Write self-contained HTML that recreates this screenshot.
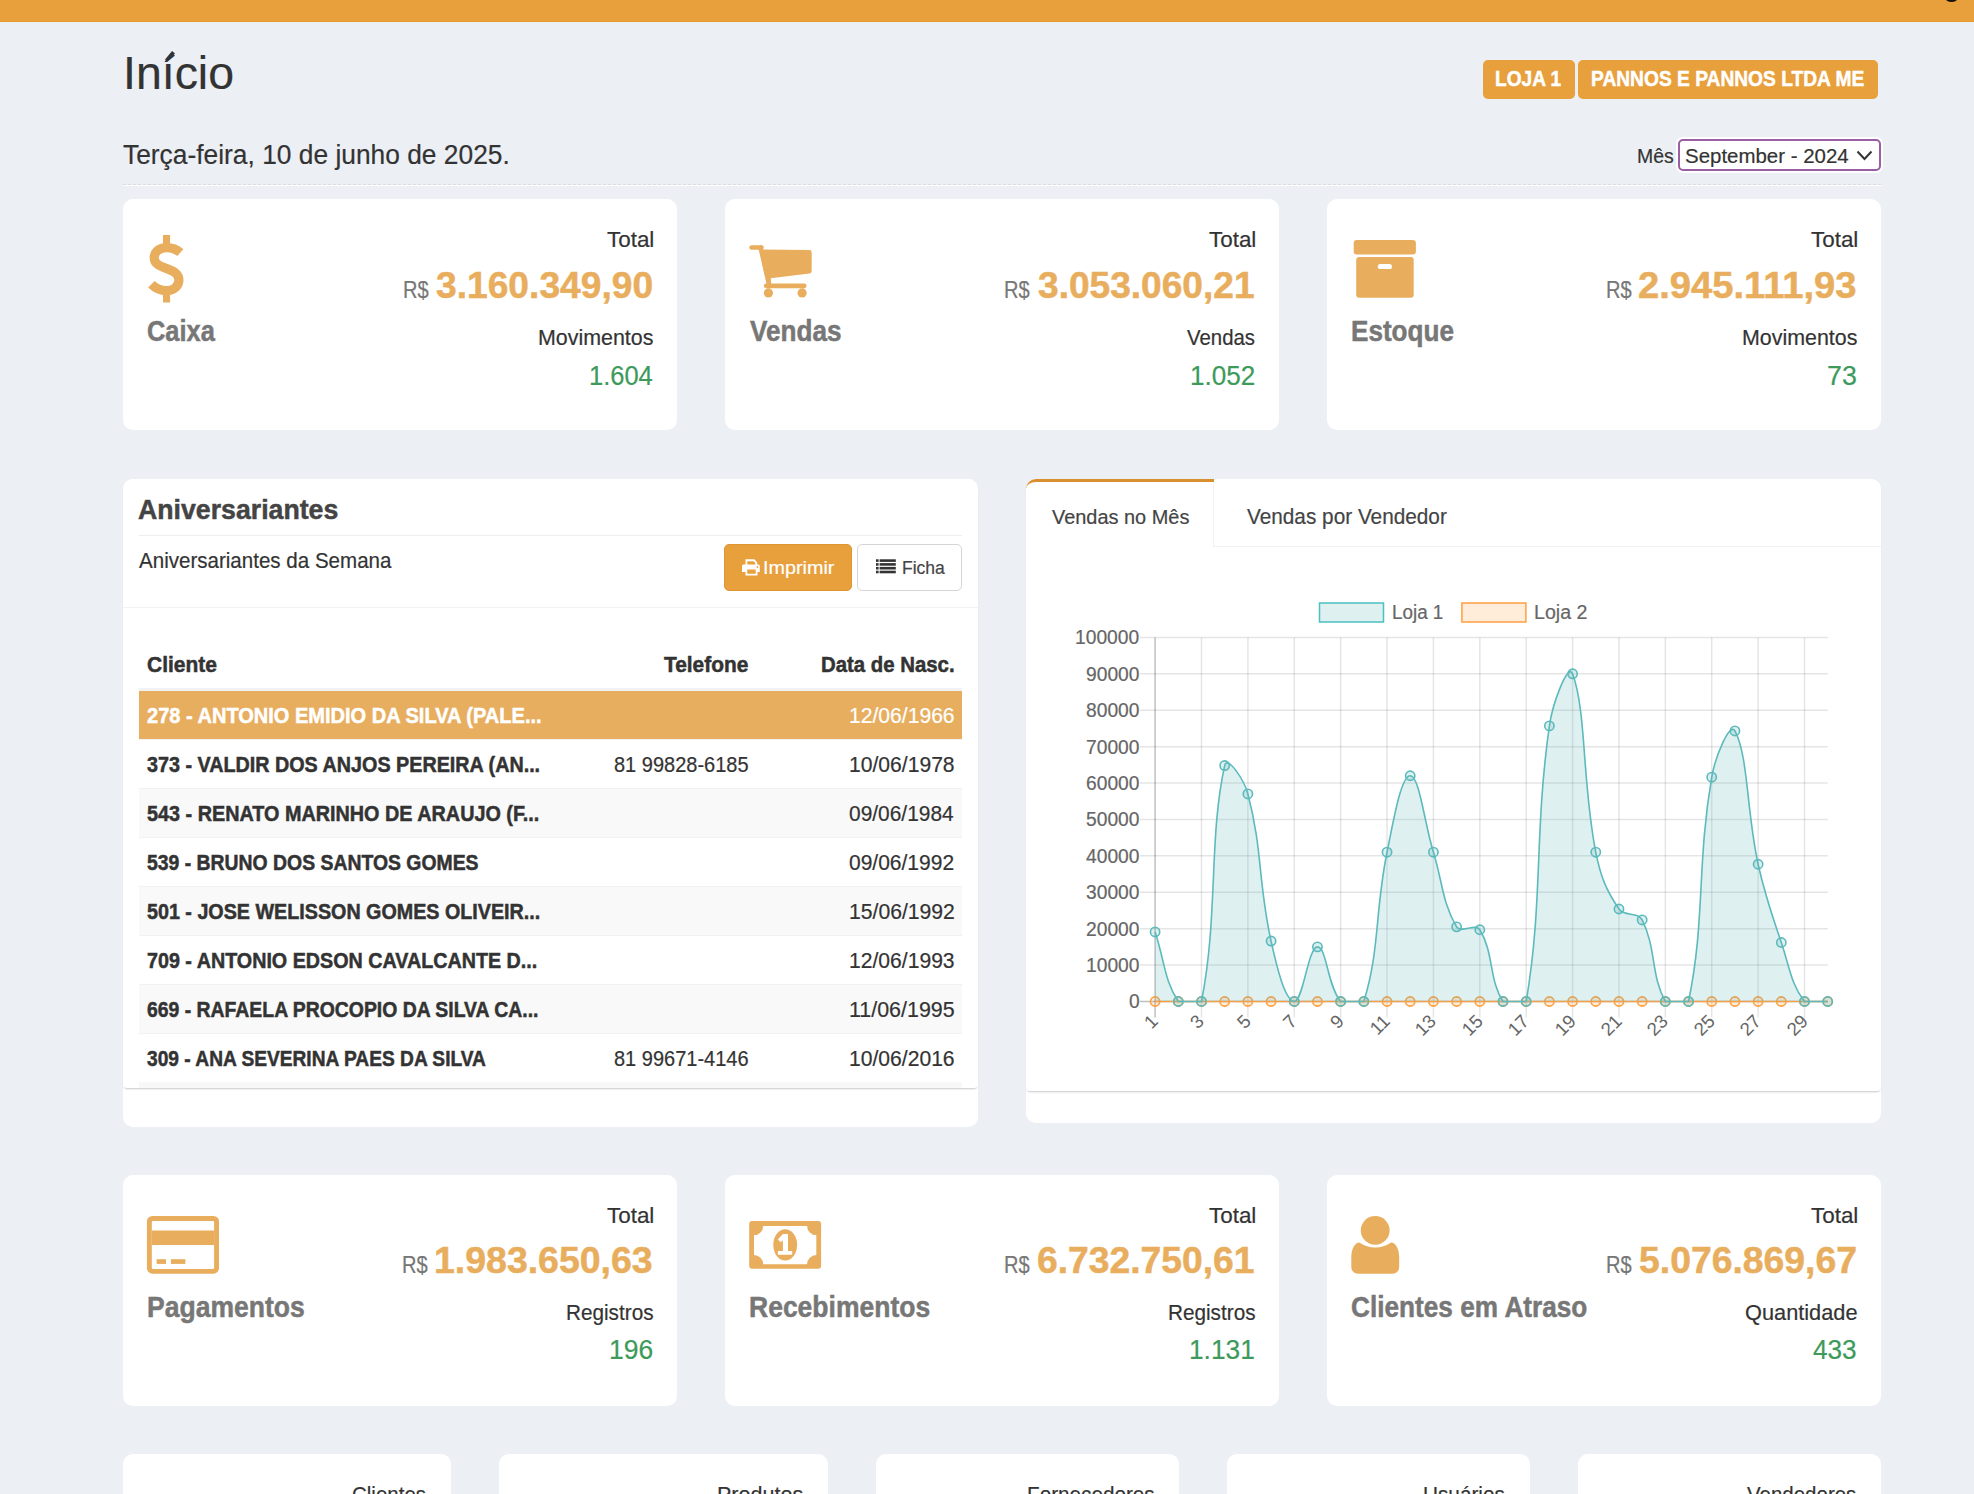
<!DOCTYPE html>
<html><head><meta charset="utf-8"><title>Início</title>
<style>
html,body{margin:0;padding:0}
body{width:1974px;height:1494px;overflow:hidden;background:#ecf0f5;position:relative;font-family:"Liberation Sans",sans-serif}
.a{position:absolute;display:block}
.t{position:absolute;white-space:nowrap;line-height:1;transform-origin:0 0}
svg.a{overflow:visible}
</style></head><body>
<div class="a" style="left:0px;top:0px;width:1974px;height:21px;background:#e8a03c"></div>
<div class="a" style="left:0px;top:21px;width:1974px;height:1px;background:#e69a2e"></div>
<div class="a" style="left:1945px;top:-7px;width:13px;height:9px;border-radius:50%;background:#1a1208"></div>
<span class="t" id="t0" style="left:122.62px;top:50.00px;font-size:46.37px;font-weight:400;color:#333;transform:scaleX(1.0020);-webkit-text-stroke:0.2px #333;">Início</span>
<svg class="a" style="left:160px;top:45px" width="20" height="20" viewBox="160 45 20 20"><polygon points="165,59.4 172.1,51 175,53.4 167.5,61.4" fill="#333"/></svg>
<span class="t" id="t1" style="left:123.47px;top:141.00px;font-size:27.76px;font-weight:400;color:#333;transform:scaleX(0.9497);-webkit-text-stroke:0.2px #333;">Terça-feira, 10 de junho de 2025.</span>
<div class="a" style="left:123px;top:184px;width:1758px;height:0;border-top:1px dashed #d8dbe0"></div>
<div class="a" style="left:123px;top:185px;width:1758px;height:1px;background:#fff"></div>
<div class="a" style="left:1483px;top:60px;width:92px;height:39px;border-radius:5px;background:#e8a03c"></div>
<div class="a" style="left:1578px;top:60px;width:300px;height:39px;border-radius:5px;background:#e8a03c"></div>
<span class="t" id="t2" style="left:1495.26px;top:68.00px;font-size:21.95px;font-weight:700;color:#fff;transform:scaleX(0.8708);-webkit-text-stroke:0.5px #fff;">LOJA 1</span>
<span class="t" id="t3" style="left:1590.75px;top:68.00px;font-size:21.95px;font-weight:700;color:#fff;transform:scaleX(0.8748);-webkit-text-stroke:0.5px #fff;">PANNOS E PANNOS LTDA ME</span>
<span class="t" id="t4" style="left:1637.04px;top:146.00px;font-size:20.78px;font-weight:400;color:#333;transform:scaleX(0.9378);-webkit-text-stroke:0.2px #333;">Mês</span>
<div class="a" style="left:1676px;top:137px;width:207px;height:36px;border-radius:7px;background:#fff"></div>
<div class="a" style="left:1678px;top:139px;width:199px;height:28px;border-radius:5px;border:2px solid #9a5ea3;background:#fff"></div>
<span class="t" id="t5" style="left:1685.48px;top:146.00px;font-size:20.78px;font-weight:400;color:#333;transform:scaleX(0.9847);-webkit-text-stroke:0.2px #333;">September - 2024</span>
<svg class="a" style="left:1855px;top:149px" width="20" height="14"><path d="M2.5 2.5 L9.5 10 L16.5 2.5" fill="none" stroke="#333" stroke-width="2"/></svg>
<div class="a" style="left:123px;top:199px;width:554px;height:231px;background:#fff;border-radius:10px"></div>
<svg class="a" style="left:140px;top:230px" width="50" height="80" viewBox="140 230 50 80"><path d="M180.3,252.6 C176.5,249.2 171.5,247.6 166.6,247.6 C159.2,247.6 154.2,252.2 154.2,257.8 C154.2,270.5 178.9,266.2 178.9,280.2 C178.9,286.3 173.3,290.6 166.6,290.6 C160.6,290.6 155.4,288.2 151.4,284.2" fill="none" stroke="#e8ae5e" stroke-width="9.2"/><rect x="163" y="235" width="7.1" height="10" fill="#e8ae5e"/><rect x="163" y="292.5" width="7.1" height="10" fill="#e8ae5e"/></svg>
<span class="t" id="t6" style="left:147.28px;top:317.00px;font-size:28.63px;font-weight:700;color:#777;transform:scaleX(0.8880);-webkit-text-stroke:0.5px #777;">Caixa</span>
<span class="t" id="t7" style="left:606.55px;top:229.00px;font-size:21.80px;font-weight:400;color:#333;transform:scaleX(1.0283);-webkit-text-stroke:0.2px #333;">Total</span>
<span class="t" id="t8" style="left:402.99px;top:279.00px;font-size:23.40px;font-weight:400;color:#777;transform:scaleX(0.8583);-webkit-text-stroke:0.2px #777;">R$</span>
<span class="t" id="t9" style="left:435.87px;top:268.00px;font-size:36.10px;font-weight:700;color:#e8ae5e;transform:scaleX(1.0307);-webkit-text-stroke:0.5px #e8ae5e;">3.160.349,90</span>
<span class="t" id="t10" style="left:537.69px;top:328.00px;font-size:21.51px;font-weight:400;color:#333;transform:scaleX(0.9958);-webkit-text-stroke:0.2px #333;">Movimentos</span>
<span class="t" id="t11" style="left:588.79px;top:363.00px;font-size:26.79px;font-weight:400;color:#3d9a5b;transform:scaleX(0.9507);-webkit-text-stroke:0.2px #3d9a5b;">1.604</span>
<div class="a" style="left:725px;top:199px;width:554px;height:231px;background:#fff;border-radius:10px"></div>
<svg class="a" style="left:740px;top:235px" width="80" height="70" viewBox="740 235 80 70"><path d="M751.6,247.5 L761.5,247.5" stroke="#e8ae5e" stroke-width="4.6" stroke-linecap="round"/><path d="M759.6,249.6 L809.4,250.1 Q811.7,250.1 811.7,252.5 L811.7,270.9 Q811.7,273.1 809.5,273.4 L770.8,278.3 L771.2,283.8 L766.8,283.8 L763.3,269 Z" fill="#e8ae5e"/><path d="M760.4,247.3 L769.2,285.2" stroke="#e8ae5e" stroke-width="4.4" stroke-linecap="round"/><rect x="763.8" y="283.5" width="42.8" height="4.7" rx="2.35" fill="#e8ae5e"/><circle cx="768.4" cy="292.9" r="4.6" fill="#e8ae5e"/><circle cx="802.1" cy="292.9" r="4.6" fill="#e8ae5e"/></svg>
<span class="t" id="t12" style="left:750.17px;top:317.00px;font-size:28.63px;font-weight:700;color:#777;transform:scaleX(0.9128);-webkit-text-stroke:0.5px #777;">Vendas</span>
<span class="t" id="t13" style="left:1208.55px;top:229.00px;font-size:21.80px;font-weight:400;color:#333;transform:scaleX(1.0283);-webkit-text-stroke:0.2px #333;">Total</span>
<span class="t" id="t14" style="left:1004.39px;top:279.00px;font-size:23.40px;font-weight:400;color:#777;transform:scaleX(0.8583);-webkit-text-stroke:0.2px #777;">R$</span>
<span class="t" id="t15" style="left:1037.87px;top:268.00px;font-size:36.10px;font-weight:700;color:#e8ae5e;transform:scaleX(1.0280);-webkit-text-stroke:0.5px #e8ae5e;">3.053.060,21</span>
<span class="t" id="t16" style="left:1187.10px;top:328.00px;font-size:21.51px;font-weight:400;color:#333;transform:scaleX(0.9481);-webkit-text-stroke:0.2px #333;">Vendas</span>
<span class="t" id="t17" style="left:1189.74px;top:363.00px;font-size:26.79px;font-weight:400;color:#3d9a5b;transform:scaleX(0.9744);-webkit-text-stroke:0.2px #3d9a5b;">1.052</span>
<div class="a" style="left:1327px;top:199px;width:554px;height:231px;background:#fff;border-radius:10px"></div>
<svg class="a" style="left:1345px;top:235px" width="80" height="70" viewBox="1345 235 80 70"><rect x="1353.7" y="240.1" width="62.2" height="14.5" rx="3" fill="#e8ae5e"/><rect x="1356.2" y="257.1" width="57.5" height="40.7" rx="3" fill="#e8ae5e"/><rect x="1377.8" y="264" width="14.2" height="5.1" rx="2.55" fill="#fff"/></svg>
<span class="t" id="t18" style="left:1350.60px;top:317.00px;font-size:28.63px;font-weight:700;color:#777;transform:scaleX(0.9119);-webkit-text-stroke:0.5px #777;">Estoque</span>
<span class="t" id="t19" style="left:1810.55px;top:229.00px;font-size:21.80px;font-weight:400;color:#333;transform:scaleX(1.0283);-webkit-text-stroke:0.2px #333;">Total</span>
<span class="t" id="t20" style="left:1606.39px;top:279.00px;font-size:23.40px;font-weight:400;color:#777;transform:scaleX(0.8583);-webkit-text-stroke:0.2px #777;">R$</span>
<span class="t" id="t21" style="left:1638.26px;top:268.00px;font-size:36.10px;font-weight:700;color:#e8ae5e;transform:scaleX(1.0575);-webkit-text-stroke:0.5px #e8ae5e;">2.945.111,93</span>
<span class="t" id="t22" style="left:1741.69px;top:328.00px;font-size:21.51px;font-weight:400;color:#333;transform:scaleX(0.9958);-webkit-text-stroke:0.2px #333;">Movimentos</span>
<span class="t" id="t23" style="left:1827.06px;top:363.00px;font-size:26.79px;font-weight:400;color:#3d9a5b;transform:scaleX(0.9990);-webkit-text-stroke:0.2px #3d9a5b;">73</span>
<div class="a" style="left:123px;top:1175px;width:554px;height:231px;background:#fff;border-radius:10px"></div>
<svg class="a" style="left:140px;top:1210px" width="90" height="70" viewBox="140 1210 90 70"><rect x="146.9" y="1216" width="72.1" height="57.7" rx="5.5" fill="#e8ae5e"/><rect x="151.8" y="1220.9" width="62.3" height="48.1" rx="1.2" fill="#fff"/><rect x="151.8" y="1230.5" width="62.3" height="14.5" fill="#e8ae5e"/><rect x="156.6" y="1259.2" width="9.4" height="4.7" fill="#e8ae5e"/><rect x="170.9" y="1259.2" width="14.5" height="4.7" fill="#e8ae5e"/></svg>
<span class="t" id="t24" style="left:146.58px;top:1293.00px;font-size:28.63px;font-weight:700;color:#777;transform:scaleX(0.9263);-webkit-text-stroke:0.5px #777;">Pagamentos</span>
<span class="t" id="t25" style="left:606.55px;top:1205.00px;font-size:21.80px;font-weight:400;color:#333;transform:scaleX(1.0283);-webkit-text-stroke:0.2px #333;">Total</span>
<span class="t" id="t26" style="left:401.59px;top:1254.00px;font-size:23.40px;font-weight:400;color:#777;transform:scaleX(0.8583);-webkit-text-stroke:0.2px #777;">R$</span>
<span class="t" id="t27" style="left:434.15px;top:1243.00px;font-size:36.10px;font-weight:700;color:#e8ae5e;transform:scaleX(1.0380);-webkit-text-stroke:0.5px #e8ae5e;">1.983.650,63</span>
<span class="t" id="t28" style="left:565.54px;top:1303.00px;font-size:21.51px;font-weight:400;color:#333;transform:scaleX(0.9637);-webkit-text-stroke:0.2px #333;">Registros</span>
<span class="t" id="t29" style="left:608.72px;top:1337.00px;font-size:26.79px;font-weight:400;color:#3d9a5b;transform:scaleX(0.9873);-webkit-text-stroke:0.2px #3d9a5b;">196</span>
<div class="a" style="left:725px;top:1175px;width:554px;height:231px;background:#fff;border-radius:10px"></div>
<svg class="a" style="left:740px;top:1215px" width="90" height="60" viewBox="740 1215 90 60"><rect x="749.2" y="1221.1" width="71.9" height="47.6" rx="3" fill="#e8ae5e"/><path d="M763.2,1225.9 L807.1,1225.9 A9.2,9.2 0 0 0 816.3,1235.1 L816.3,1255 A9.2,9.2 0 0 0 807.1,1264.2 L763.2,1264.2 A9.2,9.2 0 0 0 754,1255 L754,1235.1 A9.2,9.2 0 0 0 763.2,1225.9 Z" fill="#fff"/><ellipse cx="785.2" cy="1244.9" rx="11.9" ry="15.7" fill="#e8ae5e"/><path d="M782.9,1234 L788,1234 L788,1250.9 L792.2,1250.9 L792.2,1254.8 L777.9,1254.8 L777.9,1250.9 L782.9,1250.9 L782.9,1240.2 L780.6,1242.2 L777.9,1239.5 Z" fill="#fff"/></svg>
<span class="t" id="t30" style="left:748.58px;top:1293.00px;font-size:28.63px;font-weight:700;color:#777;transform:scaleX(0.9258);-webkit-text-stroke:0.5px #777;">Recebimentos</span>
<span class="t" id="t31" style="left:1208.55px;top:1205.00px;font-size:21.80px;font-weight:400;color:#333;transform:scaleX(1.0283);-webkit-text-stroke:0.2px #333;">Total</span>
<span class="t" id="t32" style="left:1004.39px;top:1254.00px;font-size:23.40px;font-weight:400;color:#777;transform:scaleX(0.8583);-webkit-text-stroke:0.2px #777;">R$</span>
<span class="t" id="t33" style="left:1036.90px;top:1243.00px;font-size:36.10px;font-weight:700;color:#e8ae5e;transform:scaleX(1.0327);-webkit-text-stroke:0.5px #e8ae5e;">6.732.750,61</span>
<span class="t" id="t34" style="left:1167.54px;top:1303.00px;font-size:21.51px;font-weight:400;color:#333;transform:scaleX(0.9637);-webkit-text-stroke:0.2px #333;">Registros</span>
<span class="t" id="t35" style="left:1189.13px;top:1337.00px;font-size:26.79px;font-weight:400;color:#3d9a5b;transform:scaleX(0.9818);-webkit-text-stroke:0.2px #3d9a5b;">1.131</span>
<div class="a" style="left:1327px;top:1175px;width:554px;height:231px;background:#fff;border-radius:10px"></div>
<svg class="a" style="left:1345px;top:1210px" width="60" height="70" viewBox="1345 1210 60 70"><circle cx="1375.2" cy="1230.4" r="14.4" fill="#e8ae5e"/><path d="M1359.3,1242.6 C1356,1242.6 1351.3,1247 1351.3,1258 L1351.3,1266.5 C1351.3,1271 1354,1273.8 1358.3,1273.8 L1392.2,1273.8 C1396.5,1273.8 1399.2,1271 1399.2,1266.5 L1399.2,1258 C1399.2,1247 1394.5,1242.6 1391.2,1242.6 C1386,1246 1381,1247.6 1375.2,1247.6 C1369.5,1247.6 1364.5,1246 1359.3,1242.6 Z" fill="#e8ae5e"/></svg>
<span class="t" id="t36" style="left:1351.25px;top:1293.00px;font-size:28.63px;font-weight:700;color:#777;transform:scaleX(0.9153);-webkit-text-stroke:0.5px #777;">Clientes em Atraso</span>
<span class="t" id="t37" style="left:1810.55px;top:1205.00px;font-size:21.80px;font-weight:400;color:#333;transform:scaleX(1.0283);-webkit-text-stroke:0.2px #333;">Total</span>
<span class="t" id="t38" style="left:1606.19px;top:1254.00px;font-size:23.40px;font-weight:400;color:#777;transform:scaleX(0.8583);-webkit-text-stroke:0.2px #777;">R$</span>
<span class="t" id="t39" style="left:1638.98px;top:1243.00px;font-size:36.10px;font-weight:700;color:#e8ae5e;transform:scaleX(1.0350);-webkit-text-stroke:0.5px #e8ae5e;">5.076.869,67</span>
<span class="t" id="t40" style="left:1744.82px;top:1303.00px;font-size:21.51px;font-weight:400;color:#333;transform:scaleX(1.0121);-webkit-text-stroke:0.2px #333;">Quantidade</span>
<span class="t" id="t41" style="left:1813.18px;top:1337.00px;font-size:26.79px;font-weight:400;color:#3d9a5b;transform:scaleX(0.9768);-webkit-text-stroke:0.2px #3d9a5b;">433</span>
<div class="a" style="left:123px;top:1454px;width:328px;height:100px;background:#fff;border-radius:10px"></div>
<span class="t" id="t42" style="left:352.17px;top:1484.00px;font-size:21.80px;font-weight:400;color:#333;transform:scaleX(0.9407);-webkit-text-stroke:0.2px #333;">Clientes</span>
<div class="a" style="left:499px;top:1454px;width:329px;height:100px;background:#fff;border-radius:10px"></div>
<span class="t" id="t43" style="left:717.08px;top:1484.00px;font-size:21.80px;font-weight:400;color:#333;transform:scaleX(0.9881);-webkit-text-stroke:0.2px #333;">Produtos</span>
<div class="a" style="left:876px;top:1454px;width:303px;height:100px;background:#fff;border-radius:10px"></div>
<span class="t" id="t44" style="left:1026.64px;top:1484.00px;font-size:21.80px;font-weight:400;color:#333;transform:scaleX(0.9491);-webkit-text-stroke:0.2px #333;">Fornecedores</span>
<div class="a" style="left:1227px;top:1454px;width:303px;height:100px;background:#fff;border-radius:10px"></div>
<span class="t" id="t45" style="left:1423.44px;top:1484.00px;font-size:21.80px;font-weight:400;color:#333;transform:scaleX(0.9520);-webkit-text-stroke:0.2px #333;">Usuários</span>
<div class="a" style="left:1578px;top:1454px;width:303px;height:100px;background:#fff;border-radius:10px"></div>
<span class="t" id="t46" style="left:1746.90px;top:1484.00px;font-size:21.80px;font-weight:400;color:#333;transform:scaleX(0.9398);-webkit-text-stroke:0.2px #333;">Vendedores</span>
<div class="a" style="left:123px;top:479px;width:855px;height:648px;background:#fff;border-radius:10px"></div>
<div class="a" style="left:123px;top:479px;width:855px;height:609px;background:#fff;border-radius:10px 10px 4px 4px;box-shadow:0 2px 2px -1px rgba(0,0,0,0.22)"></div>
<span class="t" id="t47" style="left:138.33px;top:496.00px;font-size:28.05px;font-weight:700;color:#444;transform:scaleX(0.9516);-webkit-text-stroke:0.5px #444;">Aniversariantes</span>
<div class="a" style="left:139px;top:535px;width:823px;height:1px;background:#eceef0"></div>
<span class="t" id="t48" style="left:139.00px;top:550.00px;font-size:22.09px;font-weight:400;color:#333;transform:scaleX(0.9307);-webkit-text-stroke:0.2px #333;">Aniversariantes da Semana</span>
<div class="a" style="left:723.5px;top:543.5px;width:128.5px;height:47.5px;background:#e8a03c;border:1px solid #df9530;border-radius:5px;box-sizing:border-box"></div>
<div class="a" style="left:857px;top:543.8px;width:104.8px;height:47px;background:#fff;border:1px solid #d5d5d5;border-radius:5px;box-sizing:border-box"></div>
<svg class="a" style="left:740px;top:556px" width="22" height="22" viewBox="740 556 22 22"><path d="M745.5,559.3 L754.3,559.3 L757.2,562.2 L757.2,565 L755.3,565 L755.3,563 L753.5,561.2 L747.3,561.2 L747.3,565 L745.5,565 Z" fill="#fff"/><path d="M743.5,564.5 L758.3,564.5 Q759.8,564.5 759.8,566 L759.8,572 L757.5,572 L757.5,575.5 L745.5,575.5 L745.5,572 L742,572 L742,566 Q742,564.5 743.5,564.5 Z M747.3,569.5 L747.3,573.7 L755.7,573.7 L755.7,569.5 Z" fill="#fff" fill-rule="evenodd"/><circle cx="757.5" cy="567" r="0.9" fill="#e8a03c"/></svg>
<span class="t" id="t49" style="left:763.02px;top:558.00px;font-size:19.04px;font-weight:400;color:#fff;transform:scaleX(1.0399);-webkit-text-stroke:0.2px #fff;">Imprimir</span>
<svg class="a" style="left:870px;top:555px" width="30" height="22" viewBox="870 555 30 22"><rect x="876" y="559.3" width="2.6" height="2.6" fill="#333"/><rect x="879.6" y="559.3" width="16.2" height="2.6" fill="#333"/><rect x="876" y="563.1" width="2.6" height="2.6" fill="#333"/><rect x="879.6" y="563.1" width="16.2" height="2.6" fill="#333"/><rect x="876" y="566.9" width="2.6" height="2.6" fill="#333"/><rect x="879.6" y="566.9" width="16.2" height="2.6" fill="#333"/><rect x="876" y="570.7" width="2.6" height="2.6" fill="#333"/><rect x="879.6" y="570.7" width="16.2" height="2.6" fill="#333"/></svg>
<span class="t" id="t50" style="left:901.70px;top:559.00px;font-size:18.75px;font-weight:400;color:#444;transform:scaleX(0.9336);-webkit-text-stroke:0.2px #444;">Ficha</span>
<div class="a" style="left:123px;top:607px;width:855px;height:1px;background:#f2f2f2"></div>
<span class="t" id="t51" style="left:146.86px;top:655.00px;font-size:21.37px;font-weight:700;color:#333;transform:scaleX(0.9820);-webkit-text-stroke:0.5px #333;">Cliente</span>
<span class="t" id="t52" style="left:664.29px;top:655.00px;font-size:21.37px;font-weight:700;color:#333;transform:scaleX(0.9771);-webkit-text-stroke:0.5px #333;">Telefone</span>
<span class="t" id="t53" style="left:820.98px;top:655.00px;font-size:21.37px;font-weight:700;color:#333;transform:scaleX(0.9535);-webkit-text-stroke:0.5px #333;">Data de Nasc.</span>
<div class="a" style="left:139px;top:688px;width:823px;height:3px;background:#f0f2f4"></div>
<div class="a" style="left:139px;top:691px;width:823px;height:48px;background:#e8ae60"></div>
<div class="a" style="left:139px;top:739px;width:823px;height:1px;background:#f1f1f1"></div>
<span class="t" id="t54" style="left:146.60px;top:705.00px;font-size:21.80px;font-weight:700;color:#fff;transform:scaleX(0.9187);-webkit-text-stroke:0.5px #fff;">278 - ANTONIO EMIDIO DA SILVA (PALE...</span>
<span class="t" id="t55" style="left:848.62px;top:706.00px;font-size:21.49px;font-weight:400;color:#fff;transform:scaleX(0.9821);-webkit-text-stroke:0.2px #fff;">12/06/1966</span>
<div class="a" style="left:139px;top:740px;width:823px;height:48px;background:#fff"></div>
<div class="a" style="left:139px;top:788px;width:823px;height:1px;background:#f1f1f1"></div>
<span class="t" id="t56" style="left:146.81px;top:754.00px;font-size:21.80px;font-weight:700;color:#333;transform:scaleX(0.9058);-webkit-text-stroke:0.5px #333;">373 - VALDIR DOS ANJOS PEREIRA (AN...</span>
<span class="t" id="t57" style="left:613.90px;top:755.00px;font-size:21.49px;font-weight:400;color:#333;transform:scaleX(0.9307);-webkit-text-stroke:0.2px #333;">81 99828-6185</span>
<span class="t" id="t58" style="left:848.62px;top:755.00px;font-size:21.49px;font-weight:400;color:#333;transform:scaleX(0.9821);-webkit-text-stroke:0.2px #333;">10/06/1978</span>
<div class="a" style="left:139px;top:789px;width:823px;height:48px;background:#f9f9f9"></div>
<div class="a" style="left:139px;top:837px;width:823px;height:1px;background:#f1f1f1"></div>
<span class="t" id="t59" style="left:146.71px;top:803.00px;font-size:21.80px;font-weight:700;color:#333;transform:scaleX(0.9083);-webkit-text-stroke:0.5px #333;">543 - RENATO MARINHO DE ARAUJO (F...</span>
<span class="t" id="t60" style="left:849.36px;top:804.00px;font-size:21.49px;font-weight:400;color:#333;transform:scaleX(0.9731);-webkit-text-stroke:0.2px #333;">09/06/1984</span>
<div class="a" style="left:139px;top:838px;width:823px;height:48px;background:#fff"></div>
<div class="a" style="left:139px;top:886px;width:823px;height:1px;background:#f1f1f1"></div>
<span class="t" id="t61" style="left:146.72px;top:852.00px;font-size:21.80px;font-weight:700;color:#333;transform:scaleX(0.8896);-webkit-text-stroke:0.5px #333;">539 - BRUNO DOS SANTOS GOMES</span>
<span class="t" id="t62" style="left:849.36px;top:853.00px;font-size:21.49px;font-weight:400;color:#333;transform:scaleX(0.9771);-webkit-text-stroke:0.2px #333;">09/06/1992</span>
<div class="a" style="left:139px;top:887px;width:823px;height:48px;background:#f9f9f9"></div>
<div class="a" style="left:139px;top:935px;width:823px;height:1px;background:#f1f1f1"></div>
<span class="t" id="t63" style="left:146.71px;top:901.00px;font-size:21.80px;font-weight:700;color:#333;transform:scaleX(0.9044);-webkit-text-stroke:0.5px #333;">501 - JOSE WELISSON GOMES OLIVEIR...</span>
<span class="t" id="t64" style="left:848.61px;top:902.00px;font-size:21.49px;font-weight:400;color:#333;transform:scaleX(0.9841);-webkit-text-stroke:0.2px #333;">15/06/1992</span>
<div class="a" style="left:139px;top:936px;width:823px;height:48px;background:#fff"></div>
<div class="a" style="left:139px;top:984px;width:823px;height:1px;background:#f1f1f1"></div>
<span class="t" id="t65" style="left:146.51px;top:950.00px;font-size:21.80px;font-weight:700;color:#333;transform:scaleX(0.9043);-webkit-text-stroke:0.5px #333;">709 - ANTONIO EDSON CAVALCANTE D...</span>
<span class="t" id="t66" style="left:848.62px;top:951.00px;font-size:21.49px;font-weight:400;color:#333;transform:scaleX(0.9821);-webkit-text-stroke:0.2px #333;">12/06/1993</span>
<div class="a" style="left:139px;top:985px;width:823px;height:48px;background:#f9f9f9"></div>
<div class="a" style="left:139px;top:1033px;width:823px;height:1px;background:#f1f1f1"></div>
<span class="t" id="t67" style="left:146.62px;top:999.00px;font-size:21.80px;font-weight:700;color:#333;transform:scaleX(0.8895);-webkit-text-stroke:0.5px #333;">669 - RAFAELA PROCOPIO DA SILVA CA...</span>
<span class="t" id="t68" style="left:848.59px;top:1000.00px;font-size:21.49px;font-weight:400;color:#333;transform:scaleX(0.9973);-webkit-text-stroke:0.2px #333;">11/06/1995</span>
<div class="a" style="left:139px;top:1034px;width:823px;height:48px;background:#fff"></div>
<div class="a" style="left:139px;top:1082px;width:823px;height:1px;background:#f1f1f1"></div>
<span class="t" id="t69" style="left:146.82px;top:1048.00px;font-size:21.80px;font-weight:700;color:#333;transform:scaleX(0.8791);-webkit-text-stroke:0.5px #333;">309 - ANA SEVERINA PAES DA SILVA</span>
<span class="t" id="t70" style="left:613.90px;top:1049.00px;font-size:21.49px;font-weight:400;color:#333;transform:scaleX(0.9307);-webkit-text-stroke:0.2px #333;">81 99671-4146</span>
<span class="t" id="t71" style="left:848.62px;top:1049.00px;font-size:21.49px;font-weight:400;color:#333;transform:scaleX(0.9821);-webkit-text-stroke:0.2px #333;">10/06/2016</span>
<div class="a" style="left:139px;top:1082px;width:823px;height:6px;background:#f8f8f8"></div>
<div class="a" style="left:1026px;top:479px;width:855px;height:644px;background:#fff;border-radius:10px"></div>
<div class="a" style="left:1026px;top:479px;width:855px;height:612px;background:#fff;border-radius:10px 10px 4px 4px;box-shadow:0 2px 2px -1px rgba(0,0,0,0.22)"></div>
<div class="a" style="left:1026px;top:479px;width:188px;height:60px;border-top:3.8px solid #d98f2e;border-radius:10px 0 0 0;box-sizing:border-box"></div>
<div class="a" style="left:1213px;top:483px;width:1px;height:64px;background:#f2f2f2"></div>
<div class="a" style="left:1214px;top:546px;width:667px;height:1px;background:#f2f2f2"></div>
<span class="t" id="t72" style="left:1051.60px;top:506.00px;font-size:21.08px;font-weight:400;color:#444;transform:scaleX(0.9455);-webkit-text-stroke:0.2px #444;">Vendas no Mês</span>
<span class="t" id="t73" style="left:1246.90px;top:507.00px;font-size:21.37px;font-weight:400;color:#444;transform:scaleX(0.9726);-webkit-text-stroke:0.2px #444;">Vendas por Vendedor</span>
<svg class="a" style="left:1040px;top:590px" width="820" height="450" viewBox="1040 590 820 450"><line x1="1140" y1="1001.50" x2="1827.7" y2="1001.50" stroke="rgba(0,0,0,0.25)" stroke-width="1.5"/><line x1="1140" y1="965.09" x2="1827.7" y2="965.09" stroke="rgba(0,0,0,0.1)" stroke-width="1.5"/><line x1="1140" y1="928.68" x2="1827.7" y2="928.68" stroke="rgba(0,0,0,0.1)" stroke-width="1.5"/><line x1="1140" y1="892.27" x2="1827.7" y2="892.27" stroke="rgba(0,0,0,0.1)" stroke-width="1.5"/><line x1="1140" y1="855.86" x2="1827.7" y2="855.86" stroke="rgba(0,0,0,0.1)" stroke-width="1.5"/><line x1="1140" y1="819.45" x2="1827.7" y2="819.45" stroke="rgba(0,0,0,0.1)" stroke-width="1.5"/><line x1="1140" y1="783.04" x2="1827.7" y2="783.04" stroke="rgba(0,0,0,0.1)" stroke-width="1.5"/><line x1="1140" y1="746.63" x2="1827.7" y2="746.63" stroke="rgba(0,0,0,0.1)" stroke-width="1.5"/><line x1="1140" y1="710.22" x2="1827.7" y2="710.22" stroke="rgba(0,0,0,0.1)" stroke-width="1.5"/><line x1="1140" y1="673.81" x2="1827.7" y2="673.81" stroke="rgba(0,0,0,0.1)" stroke-width="1.5"/><line x1="1140" y1="637.40" x2="1827.7" y2="637.40" stroke="rgba(0,0,0,0.1)" stroke-width="1.5"/><line x1="1155.10" y1="637.4" x2="1155.10" y2="1017.4" stroke="rgba(0,0,0,0.25)" stroke-width="1.5"/><line x1="1201.49" y1="637.4" x2="1201.49" y2="1017.4" stroke="rgba(0,0,0,0.1)" stroke-width="1.5"/><line x1="1247.87" y1="637.4" x2="1247.87" y2="1017.4" stroke="rgba(0,0,0,0.1)" stroke-width="1.5"/><line x1="1294.26" y1="637.4" x2="1294.26" y2="1017.4" stroke="rgba(0,0,0,0.1)" stroke-width="1.5"/><line x1="1340.64" y1="637.4" x2="1340.64" y2="1017.4" stroke="rgba(0,0,0,0.1)" stroke-width="1.5"/><line x1="1387.03" y1="637.4" x2="1387.03" y2="1017.4" stroke="rgba(0,0,0,0.1)" stroke-width="1.5"/><line x1="1433.42" y1="637.4" x2="1433.42" y2="1017.4" stroke="rgba(0,0,0,0.1)" stroke-width="1.5"/><line x1="1479.80" y1="637.4" x2="1479.80" y2="1017.4" stroke="rgba(0,0,0,0.1)" stroke-width="1.5"/><line x1="1526.19" y1="637.4" x2="1526.19" y2="1017.4" stroke="rgba(0,0,0,0.1)" stroke-width="1.5"/><line x1="1572.58" y1="637.4" x2="1572.58" y2="1017.4" stroke="rgba(0,0,0,0.1)" stroke-width="1.5"/><line x1="1618.96" y1="637.4" x2="1618.96" y2="1017.4" stroke="rgba(0,0,0,0.1)" stroke-width="1.5"/><line x1="1665.35" y1="637.4" x2="1665.35" y2="1017.4" stroke="rgba(0,0,0,0.1)" stroke-width="1.5"/><line x1="1711.73" y1="637.4" x2="1711.73" y2="1017.4" stroke="rgba(0,0,0,0.1)" stroke-width="1.5"/><line x1="1758.12" y1="637.4" x2="1758.12" y2="1017.4" stroke="rgba(0,0,0,0.1)" stroke-width="1.5"/><line x1="1804.51" y1="637.4" x2="1804.51" y2="1017.4" stroke="rgba(0,0,0,0.1)" stroke-width="1.5"/><path d="M1155.10,1001.50 C1164.38,1001.50 1169.02,1001.50 1178.29,1001.50 C1187.57,1001.50 1192.21,1001.50 1201.49,1001.50 C1210.76,1001.50 1215.40,1001.50 1224.68,1001.50 C1233.96,1001.50 1238.60,1001.50 1247.87,1001.50 C1257.15,1001.50 1261.79,1001.50 1271.07,1001.50 C1280.34,1001.50 1284.98,1001.50 1294.26,1001.50 C1303.54,1001.50 1308.17,1001.50 1317.45,1001.50 C1326.73,1001.50 1331.37,1001.50 1340.64,1001.50 C1349.92,1001.50 1354.56,1001.50 1363.84,1001.50 C1373.12,1001.50 1377.75,1001.50 1387.03,1001.50 C1396.31,1001.50 1400.95,1001.50 1410.22,1001.50 C1419.50,1001.50 1424.14,1001.50 1433.42,1001.50 C1442.69,1001.50 1447.33,1001.50 1456.61,1001.50 C1465.89,1001.50 1470.53,1001.50 1479.80,1001.50 C1489.08,1001.50 1493.72,1001.50 1503.00,1001.50 C1512.27,1001.50 1516.91,1001.50 1526.19,1001.50 C1535.47,1001.50 1540.11,1001.50 1549.38,1001.50 C1558.66,1001.50 1563.30,1001.50 1572.58,1001.50 C1581.85,1001.50 1586.49,1001.50 1595.77,1001.50 C1605.05,1001.50 1609.68,1001.50 1618.96,1001.50 C1628.24,1001.50 1632.88,1001.50 1642.16,1001.50 C1651.43,1001.50 1656.07,1001.50 1665.35,1001.50 C1674.63,1001.50 1679.26,1001.50 1688.54,1001.50 C1697.82,1001.50 1702.46,1001.50 1711.73,1001.50 C1721.01,1001.50 1725.65,1001.50 1734.93,1001.50 C1744.20,1001.50 1748.84,1001.50 1758.12,1001.50 C1767.40,1001.50 1772.04,1001.50 1781.31,1001.50 C1790.59,1001.50 1795.23,1001.50 1804.51,1001.50 C1813.78,1001.50 1818.42,1001.50 1827.70,1001.50 L1827.7,1001.5 L1155.1,1001.5 Z" fill="rgba(255,159,64,0.2)"/><path d="M1155.10,1001.50 C1164.38,1001.50 1169.02,1001.50 1178.29,1001.50 C1187.57,1001.50 1192.21,1001.50 1201.49,1001.50 C1210.76,1001.50 1215.40,1001.50 1224.68,1001.50 C1233.96,1001.50 1238.60,1001.50 1247.87,1001.50 C1257.15,1001.50 1261.79,1001.50 1271.07,1001.50 C1280.34,1001.50 1284.98,1001.50 1294.26,1001.50 C1303.54,1001.50 1308.17,1001.50 1317.45,1001.50 C1326.73,1001.50 1331.37,1001.50 1340.64,1001.50 C1349.92,1001.50 1354.56,1001.50 1363.84,1001.50 C1373.12,1001.50 1377.75,1001.50 1387.03,1001.50 C1396.31,1001.50 1400.95,1001.50 1410.22,1001.50 C1419.50,1001.50 1424.14,1001.50 1433.42,1001.50 C1442.69,1001.50 1447.33,1001.50 1456.61,1001.50 C1465.89,1001.50 1470.53,1001.50 1479.80,1001.50 C1489.08,1001.50 1493.72,1001.50 1503.00,1001.50 C1512.27,1001.50 1516.91,1001.50 1526.19,1001.50 C1535.47,1001.50 1540.11,1001.50 1549.38,1001.50 C1558.66,1001.50 1563.30,1001.50 1572.58,1001.50 C1581.85,1001.50 1586.49,1001.50 1595.77,1001.50 C1605.05,1001.50 1609.68,1001.50 1618.96,1001.50 C1628.24,1001.50 1632.88,1001.50 1642.16,1001.50 C1651.43,1001.50 1656.07,1001.50 1665.35,1001.50 C1674.63,1001.50 1679.26,1001.50 1688.54,1001.50 C1697.82,1001.50 1702.46,1001.50 1711.73,1001.50 C1721.01,1001.50 1725.65,1001.50 1734.93,1001.50 C1744.20,1001.50 1748.84,1001.50 1758.12,1001.50 C1767.40,1001.50 1772.04,1001.50 1781.31,1001.50 C1790.59,1001.50 1795.23,1001.50 1804.51,1001.50 C1813.78,1001.50 1818.42,1001.50 1827.70,1001.50" fill="none" stroke="rgb(255,159,64)" stroke-width="1.6"/><circle cx="1155.10" cy="1001.50" r="4.65" fill="rgba(255,159,64,0.2)" stroke="rgb(255,159,64)" stroke-width="1.6"/><circle cx="1178.29" cy="1001.50" r="4.65" fill="rgba(255,159,64,0.2)" stroke="rgb(255,159,64)" stroke-width="1.6"/><circle cx="1201.49" cy="1001.50" r="4.65" fill="rgba(255,159,64,0.2)" stroke="rgb(255,159,64)" stroke-width="1.6"/><circle cx="1224.68" cy="1001.50" r="4.65" fill="rgba(255,159,64,0.2)" stroke="rgb(255,159,64)" stroke-width="1.6"/><circle cx="1247.87" cy="1001.50" r="4.65" fill="rgba(255,159,64,0.2)" stroke="rgb(255,159,64)" stroke-width="1.6"/><circle cx="1271.07" cy="1001.50" r="4.65" fill="rgba(255,159,64,0.2)" stroke="rgb(255,159,64)" stroke-width="1.6"/><circle cx="1294.26" cy="1001.50" r="4.65" fill="rgba(255,159,64,0.2)" stroke="rgb(255,159,64)" stroke-width="1.6"/><circle cx="1317.45" cy="1001.50" r="4.65" fill="rgba(255,159,64,0.2)" stroke="rgb(255,159,64)" stroke-width="1.6"/><circle cx="1340.64" cy="1001.50" r="4.65" fill="rgba(255,159,64,0.2)" stroke="rgb(255,159,64)" stroke-width="1.6"/><circle cx="1363.84" cy="1001.50" r="4.65" fill="rgba(255,159,64,0.2)" stroke="rgb(255,159,64)" stroke-width="1.6"/><circle cx="1387.03" cy="1001.50" r="4.65" fill="rgba(255,159,64,0.2)" stroke="rgb(255,159,64)" stroke-width="1.6"/><circle cx="1410.22" cy="1001.50" r="4.65" fill="rgba(255,159,64,0.2)" stroke="rgb(255,159,64)" stroke-width="1.6"/><circle cx="1433.42" cy="1001.50" r="4.65" fill="rgba(255,159,64,0.2)" stroke="rgb(255,159,64)" stroke-width="1.6"/><circle cx="1456.61" cy="1001.50" r="4.65" fill="rgba(255,159,64,0.2)" stroke="rgb(255,159,64)" stroke-width="1.6"/><circle cx="1479.80" cy="1001.50" r="4.65" fill="rgba(255,159,64,0.2)" stroke="rgb(255,159,64)" stroke-width="1.6"/><circle cx="1503.00" cy="1001.50" r="4.65" fill="rgba(255,159,64,0.2)" stroke="rgb(255,159,64)" stroke-width="1.6"/><circle cx="1526.19" cy="1001.50" r="4.65" fill="rgba(255,159,64,0.2)" stroke="rgb(255,159,64)" stroke-width="1.6"/><circle cx="1549.38" cy="1001.50" r="4.65" fill="rgba(255,159,64,0.2)" stroke="rgb(255,159,64)" stroke-width="1.6"/><circle cx="1572.58" cy="1001.50" r="4.65" fill="rgba(255,159,64,0.2)" stroke="rgb(255,159,64)" stroke-width="1.6"/><circle cx="1595.77" cy="1001.50" r="4.65" fill="rgba(255,159,64,0.2)" stroke="rgb(255,159,64)" stroke-width="1.6"/><circle cx="1618.96" cy="1001.50" r="4.65" fill="rgba(255,159,64,0.2)" stroke="rgb(255,159,64)" stroke-width="1.6"/><circle cx="1642.16" cy="1001.50" r="4.65" fill="rgba(255,159,64,0.2)" stroke="rgb(255,159,64)" stroke-width="1.6"/><circle cx="1665.35" cy="1001.50" r="4.65" fill="rgba(255,159,64,0.2)" stroke="rgb(255,159,64)" stroke-width="1.6"/><circle cx="1688.54" cy="1001.50" r="4.65" fill="rgba(255,159,64,0.2)" stroke="rgb(255,159,64)" stroke-width="1.6"/><circle cx="1711.73" cy="1001.50" r="4.65" fill="rgba(255,159,64,0.2)" stroke="rgb(255,159,64)" stroke-width="1.6"/><circle cx="1734.93" cy="1001.50" r="4.65" fill="rgba(255,159,64,0.2)" stroke="rgb(255,159,64)" stroke-width="1.6"/><circle cx="1758.12" cy="1001.50" r="4.65" fill="rgba(255,159,64,0.2)" stroke="rgb(255,159,64)" stroke-width="1.6"/><circle cx="1781.31" cy="1001.50" r="4.65" fill="rgba(255,159,64,0.2)" stroke="rgb(255,159,64)" stroke-width="1.6"/><circle cx="1804.51" cy="1001.50" r="4.65" fill="rgba(255,159,64,0.2)" stroke="rgb(255,159,64)" stroke-width="1.6"/><circle cx="1827.70" cy="1001.50" r="4.65" fill="rgba(255,159,64,0.2)" stroke="rgb(255,159,64)" stroke-width="1.6"/><path d="M1155.10,931.96 C1164.38,959.77 1164.20,980.37 1178.29,1001.50 C1182.75,1001.50 1199.83,1001.50 1201.49,1001.50 C1218.39,915.54 1208.61,837.46 1224.68,765.56 C1227.16,754.44 1244.21,780.09 1247.87,793.96 C1262.76,850.29 1258.13,883.20 1271.07,941.06 C1276.69,966.21 1284.58,1000.28 1294.26,1001.50 C1303.13,1001.50 1308.17,946.88 1317.45,946.88 C1326.73,946.88 1327.30,985.79 1340.64,1001.50 C1345.86,1001.50 1361.37,1001.50 1363.84,1001.50 C1379.92,949.73 1374.90,911.28 1387.03,852.22 C1393.45,820.98 1400.95,775.76 1410.22,775.76 C1419.50,775.76 1424.04,821.67 1433.42,852.22 C1442.59,882.11 1442.33,902.98 1456.61,926.86 C1460.88,934.00 1475.41,922.71 1479.80,929.77 C1493.97,952.56 1488.81,979.56 1503.00,1001.50 C1507.36,1001.50 1524.75,1001.50 1526.19,1001.50 C1543.31,899.78 1534.00,834.56 1549.38,725.88 C1552.55,703.48 1568.11,661.65 1572.58,673.81 C1586.67,712.19 1581.93,782.06 1595.77,852.22 C1600.49,876.14 1605.88,889.91 1618.96,909.02 C1624.43,917.00 1637.85,911.35 1642.16,919.94 C1656.40,948.35 1650.78,975.88 1665.35,1001.50 C1669.33,1001.50 1686.81,1001.50 1688.54,1001.50 C1705.37,920.15 1696.64,865.23 1711.73,777.21 C1715.20,757.02 1729.79,721.34 1734.93,730.97 C1748.35,756.15 1746.55,811.47 1758.12,864.23 C1765.10,896.08 1770.87,911.61 1781.31,942.52 C1789.42,966.51 1790.92,984.23 1804.51,1001.50 C1809.48,1001.50 1818.42,1001.50 1827.70,1001.50 L1827.7,1001.5 L1155.1,1001.5 Z" fill="rgba(95,182,182,0.2)"/><path d="M1155.10,931.96 C1164.38,959.77 1164.20,980.37 1178.29,1001.50 C1182.75,1001.50 1199.83,1001.50 1201.49,1001.50 C1218.39,915.54 1208.61,837.46 1224.68,765.56 C1227.16,754.44 1244.21,780.09 1247.87,793.96 C1262.76,850.29 1258.13,883.20 1271.07,941.06 C1276.69,966.21 1284.58,1000.28 1294.26,1001.50 C1303.13,1001.50 1308.17,946.88 1317.45,946.88 C1326.73,946.88 1327.30,985.79 1340.64,1001.50 C1345.86,1001.50 1361.37,1001.50 1363.84,1001.50 C1379.92,949.73 1374.90,911.28 1387.03,852.22 C1393.45,820.98 1400.95,775.76 1410.22,775.76 C1419.50,775.76 1424.04,821.67 1433.42,852.22 C1442.59,882.11 1442.33,902.98 1456.61,926.86 C1460.88,934.00 1475.41,922.71 1479.80,929.77 C1493.97,952.56 1488.81,979.56 1503.00,1001.50 C1507.36,1001.50 1524.75,1001.50 1526.19,1001.50 C1543.31,899.78 1534.00,834.56 1549.38,725.88 C1552.55,703.48 1568.11,661.65 1572.58,673.81 C1586.67,712.19 1581.93,782.06 1595.77,852.22 C1600.49,876.14 1605.88,889.91 1618.96,909.02 C1624.43,917.00 1637.85,911.35 1642.16,919.94 C1656.40,948.35 1650.78,975.88 1665.35,1001.50 C1669.33,1001.50 1686.81,1001.50 1688.54,1001.50 C1705.37,920.15 1696.64,865.23 1711.73,777.21 C1715.20,757.02 1729.79,721.34 1734.93,730.97 C1748.35,756.15 1746.55,811.47 1758.12,864.23 C1765.10,896.08 1770.87,911.61 1781.31,942.52 C1789.42,966.51 1790.92,984.23 1804.51,1001.50 C1809.48,1001.50 1818.42,1001.50 1827.70,1001.50" fill="none" stroke="rgb(92,186,189)" stroke-width="1.6"/><circle cx="1155.10" cy="931.96" r="4.65" fill="rgba(95,182,182,0.2)" stroke="rgb(92,186,189)" stroke-width="1.6"/><circle cx="1178.29" cy="1001.50" r="4.65" fill="rgba(95,182,182,0.2)" stroke="rgb(92,186,189)" stroke-width="1.6"/><circle cx="1201.49" cy="1001.50" r="4.65" fill="rgba(95,182,182,0.2)" stroke="rgb(92,186,189)" stroke-width="1.6"/><circle cx="1224.68" cy="765.56" r="4.65" fill="rgba(95,182,182,0.2)" stroke="rgb(92,186,189)" stroke-width="1.6"/><circle cx="1247.87" cy="793.96" r="4.65" fill="rgba(95,182,182,0.2)" stroke="rgb(92,186,189)" stroke-width="1.6"/><circle cx="1271.07" cy="941.06" r="4.65" fill="rgba(95,182,182,0.2)" stroke="rgb(92,186,189)" stroke-width="1.6"/><circle cx="1294.26" cy="1001.50" r="4.65" fill="rgba(95,182,182,0.2)" stroke="rgb(92,186,189)" stroke-width="1.6"/><circle cx="1317.45" cy="946.88" r="4.65" fill="rgba(95,182,182,0.2)" stroke="rgb(92,186,189)" stroke-width="1.6"/><circle cx="1340.64" cy="1001.50" r="4.65" fill="rgba(95,182,182,0.2)" stroke="rgb(92,186,189)" stroke-width="1.6"/><circle cx="1363.84" cy="1001.50" r="4.65" fill="rgba(95,182,182,0.2)" stroke="rgb(92,186,189)" stroke-width="1.6"/><circle cx="1387.03" cy="852.22" r="4.65" fill="rgba(95,182,182,0.2)" stroke="rgb(92,186,189)" stroke-width="1.6"/><circle cx="1410.22" cy="775.76" r="4.65" fill="rgba(95,182,182,0.2)" stroke="rgb(92,186,189)" stroke-width="1.6"/><circle cx="1433.42" cy="852.22" r="4.65" fill="rgba(95,182,182,0.2)" stroke="rgb(92,186,189)" stroke-width="1.6"/><circle cx="1456.61" cy="926.86" r="4.65" fill="rgba(95,182,182,0.2)" stroke="rgb(92,186,189)" stroke-width="1.6"/><circle cx="1479.80" cy="929.77" r="4.65" fill="rgba(95,182,182,0.2)" stroke="rgb(92,186,189)" stroke-width="1.6"/><circle cx="1503.00" cy="1001.50" r="4.65" fill="rgba(95,182,182,0.2)" stroke="rgb(92,186,189)" stroke-width="1.6"/><circle cx="1526.19" cy="1001.50" r="4.65" fill="rgba(95,182,182,0.2)" stroke="rgb(92,186,189)" stroke-width="1.6"/><circle cx="1549.38" cy="725.88" r="4.65" fill="rgba(95,182,182,0.2)" stroke="rgb(92,186,189)" stroke-width="1.6"/><circle cx="1572.58" cy="673.81" r="4.65" fill="rgba(95,182,182,0.2)" stroke="rgb(92,186,189)" stroke-width="1.6"/><circle cx="1595.77" cy="852.22" r="4.65" fill="rgba(95,182,182,0.2)" stroke="rgb(92,186,189)" stroke-width="1.6"/><circle cx="1618.96" cy="909.02" r="4.65" fill="rgba(95,182,182,0.2)" stroke="rgb(92,186,189)" stroke-width="1.6"/><circle cx="1642.16" cy="919.94" r="4.65" fill="rgba(95,182,182,0.2)" stroke="rgb(92,186,189)" stroke-width="1.6"/><circle cx="1665.35" cy="1001.50" r="4.65" fill="rgba(95,182,182,0.2)" stroke="rgb(92,186,189)" stroke-width="1.6"/><circle cx="1688.54" cy="1001.50" r="4.65" fill="rgba(95,182,182,0.2)" stroke="rgb(92,186,189)" stroke-width="1.6"/><circle cx="1711.73" cy="777.21" r="4.65" fill="rgba(95,182,182,0.2)" stroke="rgb(92,186,189)" stroke-width="1.6"/><circle cx="1734.93" cy="730.97" r="4.65" fill="rgba(95,182,182,0.2)" stroke="rgb(92,186,189)" stroke-width="1.6"/><circle cx="1758.12" cy="864.23" r="4.65" fill="rgba(95,182,182,0.2)" stroke="rgb(92,186,189)" stroke-width="1.6"/><circle cx="1781.31" cy="942.52" r="4.65" fill="rgba(95,182,182,0.2)" stroke="rgb(92,186,189)" stroke-width="1.6"/><circle cx="1804.51" cy="1001.50" r="4.65" fill="rgba(95,182,182,0.2)" stroke="rgb(92,186,189)" stroke-width="1.6"/><circle cx="1827.70" cy="1001.50" r="4.65" fill="rgba(95,182,182,0.2)" stroke="rgb(92,186,189)" stroke-width="1.6"/><rect x="1319.5" y="603" width="64" height="19" fill="rgba(95,182,182,0.2)" stroke="rgb(75,192,192)" stroke-width="1.5"/><rect x="1461.9" y="603" width="64" height="19" fill="rgba(255,159,64,0.2)" stroke="rgb(255,159,64)" stroke-width="1.5"/></svg>
<span class="t" id="t74" style="left:1392.39px;top:603.00px;font-size:19.91px;font-weight:400;color:#666;transform:scaleX(0.9464);-webkit-text-stroke:0.2px #666;">Loja 1</span>
<span class="t" id="t75" style="left:1534.43px;top:603.00px;font-size:19.91px;font-weight:400;color:#666;transform:scaleX(0.9850);-webkit-text-stroke:0.2px #666;">Loja 2</span>
<span class="t" id="t76" style="left:1128.60px;top:992.00px;font-size:19.77px;font-weight:400;color:#666;transform:scaleX(0.9724);-webkit-text-stroke:0.2px #666;">0</span>
<span class="t" id="t77" style="left:1085.83px;top:956.00px;font-size:19.77px;font-weight:400;color:#666;transform:scaleX(0.9724);-webkit-text-stroke:0.2px #666;">10000</span>
<span class="t" id="t78" style="left:1085.83px;top:920.00px;font-size:19.77px;font-weight:400;color:#666;transform:scaleX(0.9724);-webkit-text-stroke:0.2px #666;">20000</span>
<span class="t" id="t79" style="left:1085.83px;top:883.00px;font-size:19.77px;font-weight:400;color:#666;transform:scaleX(0.9724);-webkit-text-stroke:0.2px #666;">30000</span>
<span class="t" id="t80" style="left:1085.83px;top:847.00px;font-size:19.77px;font-weight:400;color:#666;transform:scaleX(0.9724);-webkit-text-stroke:0.2px #666;">40000</span>
<span class="t" id="t81" style="left:1085.83px;top:810.00px;font-size:19.77px;font-weight:400;color:#666;transform:scaleX(0.9724);-webkit-text-stroke:0.2px #666;">50000</span>
<span class="t" id="t82" style="left:1085.83px;top:774.00px;font-size:19.77px;font-weight:400;color:#666;transform:scaleX(0.9724);-webkit-text-stroke:0.2px #666;">60000</span>
<span class="t" id="t83" style="left:1085.83px;top:738.00px;font-size:19.77px;font-weight:400;color:#666;transform:scaleX(0.9724);-webkit-text-stroke:0.2px #666;">70000</span>
<span class="t" id="t84" style="left:1085.83px;top:701.00px;font-size:19.77px;font-weight:400;color:#666;transform:scaleX(0.9724);-webkit-text-stroke:0.2px #666;">80000</span>
<span class="t" id="t85" style="left:1085.83px;top:665.00px;font-size:19.77px;font-weight:400;color:#666;transform:scaleX(0.9724);-webkit-text-stroke:0.2px #666;">90000</span>
<span class="t" id="t86" style="left:1075.16px;top:628.00px;font-size:19.77px;font-weight:400;color:#666;transform:scaleX(0.9724);-webkit-text-stroke:0.2px #666;">100000</span>
<span class="t" style="left:955.10px;top:1008.70px;width:200px;text-align:right;font-size:18.6px;line-height:18.6px;color:#666;transform-origin:100% 50%;transform:rotate(-45deg)">1</span><span class="t" style="left:1001.49px;top:1008.70px;width:200px;text-align:right;font-size:18.6px;line-height:18.6px;color:#666;transform-origin:100% 50%;transform:rotate(-45deg)">3</span><span class="t" style="left:1047.87px;top:1008.70px;width:200px;text-align:right;font-size:18.6px;line-height:18.6px;color:#666;transform-origin:100% 50%;transform:rotate(-45deg)">5</span><span class="t" style="left:1094.26px;top:1008.70px;width:200px;text-align:right;font-size:18.6px;line-height:18.6px;color:#666;transform-origin:100% 50%;transform:rotate(-45deg)">7</span><span class="t" style="left:1140.64px;top:1008.70px;width:200px;text-align:right;font-size:18.6px;line-height:18.6px;color:#666;transform-origin:100% 50%;transform:rotate(-45deg)">9</span><span class="t" style="left:1187.03px;top:1008.70px;width:200px;text-align:right;font-size:18.6px;line-height:18.6px;color:#666;transform-origin:100% 50%;transform:rotate(-45deg)">11</span><span class="t" style="left:1233.42px;top:1008.70px;width:200px;text-align:right;font-size:18.6px;line-height:18.6px;color:#666;transform-origin:100% 50%;transform:rotate(-45deg)">13</span><span class="t" style="left:1279.80px;top:1008.70px;width:200px;text-align:right;font-size:18.6px;line-height:18.6px;color:#666;transform-origin:100% 50%;transform:rotate(-45deg)">15</span><span class="t" style="left:1326.19px;top:1008.70px;width:200px;text-align:right;font-size:18.6px;line-height:18.6px;color:#666;transform-origin:100% 50%;transform:rotate(-45deg)">17</span><span class="t" style="left:1372.58px;top:1008.70px;width:200px;text-align:right;font-size:18.6px;line-height:18.6px;color:#666;transform-origin:100% 50%;transform:rotate(-45deg)">19</span><span class="t" style="left:1418.96px;top:1008.70px;width:200px;text-align:right;font-size:18.6px;line-height:18.6px;color:#666;transform-origin:100% 50%;transform:rotate(-45deg)">21</span><span class="t" style="left:1465.35px;top:1008.70px;width:200px;text-align:right;font-size:18.6px;line-height:18.6px;color:#666;transform-origin:100% 50%;transform:rotate(-45deg)">23</span><span class="t" style="left:1511.73px;top:1008.70px;width:200px;text-align:right;font-size:18.6px;line-height:18.6px;color:#666;transform-origin:100% 50%;transform:rotate(-45deg)">25</span><span class="t" style="left:1558.12px;top:1008.70px;width:200px;text-align:right;font-size:18.6px;line-height:18.6px;color:#666;transform-origin:100% 50%;transform:rotate(-45deg)">27</span><span class="t" style="left:1604.51px;top:1008.70px;width:200px;text-align:right;font-size:18.6px;line-height:18.6px;color:#666;transform-origin:100% 50%;transform:rotate(-45deg)">29</span>
</body></html>
